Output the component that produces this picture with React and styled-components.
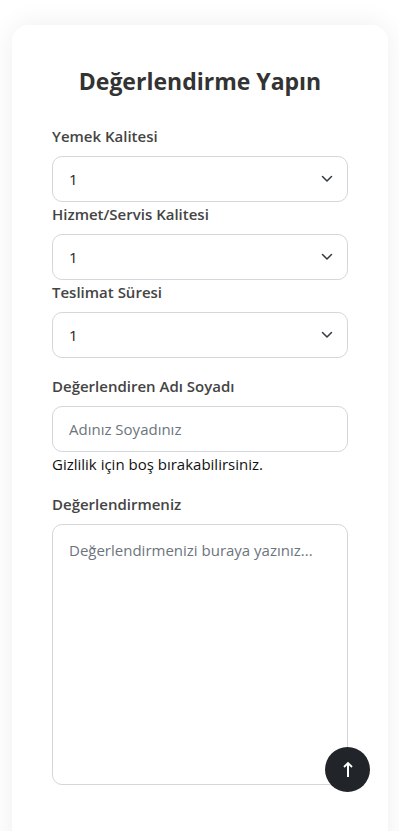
import React from 'react'
import styled, { createGlobalStyle } from 'styled-components'

const GlobalStyle = createGlobalStyle`
  * { box-sizing: border-box; }
  body {
    margin: 0;
    background: #fff;
    font-family: "Open Sans", "Noto Sans", sans-serif;
    color: #212529;
  }
`

const Page = styled.div`
  padding: 25px 11px 60px 12px;
`

const Card = styled.div`
  background: #fff;
  border-radius: 16px;
  box-shadow: 0 0 28px rgba(0, 0, 0, 0.07);
  padding: 41px 40px 80px;
`

const Title = styled.h2`
  margin: 0 0 28px;
  text-align: center;
  font-size: 23px;
  line-height: 30px;
  font-weight: 700;
  color: #333;
`

const Group = styled.div`
  margin-bottom: ${p => p.$gap || 0}px;
`

const Label = styled.label`
  display: block;
  font-size: 15px;
  line-height: 24px;
  font-weight: 600;
  color: #444;
  margin-bottom: 8px;
`

const SelectWrap = styled.div`
  position: relative;
  svg {
    position: absolute;
    right: 15px;
    top: 50%;
    transform: translateY(-50%);
    pointer-events: none;
  }
`

const Select = styled.select`
  appearance: none;
  width: 100%;
  height: 46px;
  padding: 0 40px 0 16px;
  font: inherit;
  font-size: 15px;
  color: #212529;
  background: #fff;
  border: 1px solid #d3d6da;
  border-radius: 10px;
  outline: none;
`

const Input = styled.input`
  width: 100%;
  height: 46px;
  padding: 0 16px;
  font: inherit;
  font-size: 15px;
  border: 1px solid #d3d6da;
  border-radius: 10px;
  outline: none;
  &::placeholder { color: #6c757d; }
`

const Help = styled.div`
  font-size: 15px;
  line-height: 24px;
  color: #111;
`

const TextArea = styled.textarea`
  display: block;
  width: 100%;
  height: 261px;
  padding: 13px 16px;
  font: inherit;
  font-size: 15px;
  line-height: 24px;
  border: 1px solid #d3d6da;
  border-radius: 10px;
  outline: none;
  resize: none;
  &::placeholder { color: #6c757d; }
`

const TopButton = styled.button`
  position: fixed;
  right: 29px;
  bottom: 39px;
  width: 45px;
  height: 45px;
  border-radius: 50%;
  border: none;
  background: #212529;
  display: flex;
  align-items: center;
  justify-content: center;
  cursor: pointer;
`

const Chevron = () => (
  <svg width="12" height="8" viewBox="0 0 12 8">
    <polyline points="1.5,1.5 6,6 10.5,1.5" fill="none" stroke="#343a40" strokeWidth="1.5" strokeLinecap="round" strokeLinejoin="round" />
  </svg>
)

function Rating({ label, gap }) {
  return (
    <Group $gap={gap}>
      <Label>{label}</Label>
      <SelectWrap>
        <Select defaultValue="1">
          {[1, 2, 3, 4, 5].map(n => <option key={n} value={n}>{n}</option>)}
        </Select>
        <Chevron />
      </SelectWrap>
    </Group>
  )
}

export default function App() {
  return (
    <>
      <GlobalStyle />
      <Page>
        <Card>
          <Title>Değerlendirme Yapın</Title>
          <Rating label="Yemek Kalitesi" />
          <Rating label="Hizmet/Servis Kalitesi" />
          <Rating label="Teslimat Süresi" gap={16} />
          <Group>
            <Label>Değerlendiren Adı Soyadı</Label>
            <Input placeholder="Adınız Soyadınız" />
          </Group>
          <Help>Gizlilik için boş bırakabilirsiniz.</Help>
          <Group style={{ marginTop: 16 }}>
            <Label>Değerlendirmeniz</Label>
            <TextArea placeholder="Değerlendirmenizi buraya yazınız..." />
          </Group>
        </Card>
      </Page>
      <TopButton aria-label="Yukarı">
        <svg width="12" height="17" viewBox="0 0 12 17">
          <line x1="6" y1="2" x2="6" y2="16" stroke="#fff" strokeWidth="2" />
          <polyline points="2,6 6,2 10,6" fill="none" stroke="#fff" strokeWidth="1.8" />
        </svg>
      </TopButton>
    </>
  )
}
